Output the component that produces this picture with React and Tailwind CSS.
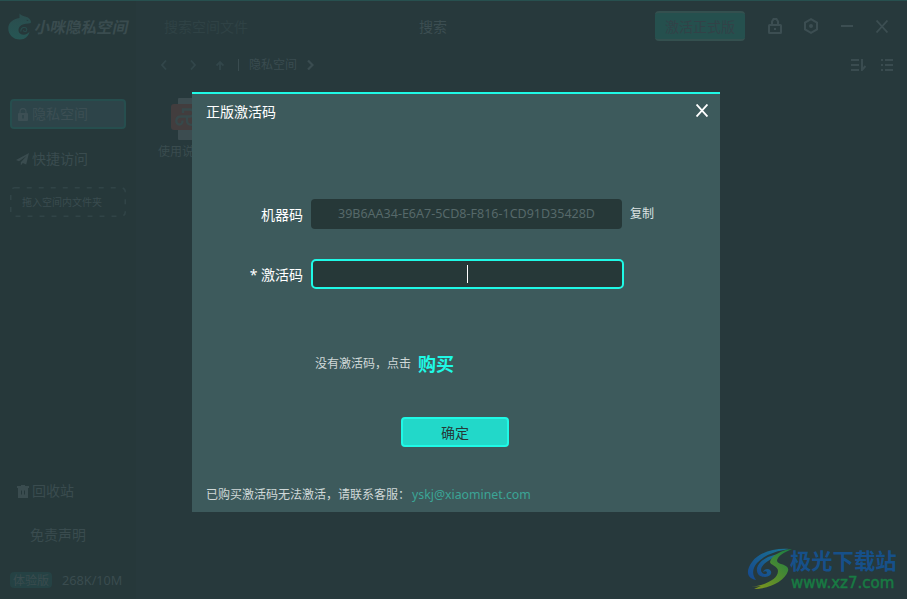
import React from 'react';

const Logo = () => (
  <svg width="24" height="27" viewBox="0 0 24 27" fill="none">
    <defs>
      <linearGradient id="logoFill" x1="0" y1="0" x2="0" y2="1">
        <stop offset="0" stopColor="#2b4c4d" />
        <stop offset="1" stopColor="#265654" />
      </linearGradient>
    </defs>
    <path
      d="M11.5 0.5C14 3.5 18 3 20.5 5C22.5 6.5 23.3 8.5 22.8 10C19.5 11 16 10.5 13.5 12C9.8 14.2 9.8 18.5 12 20.5C15 22.8 20 21.5 21.5 18.5C20.7 23 17 26.5 12 26.5C5 26.5 0.3 21.5 0.3 15.5C0.3 9.5 5 6 11.5 5Z"
      fill="url(#logoFill)"
    />
    <path d="M13 18.5C11.8 14 18.8 13 18.8 16.8C18.8 19.3 15.5 19.3 15.5 17.2" stroke="#284d4d" strokeWidth="1.1" />
    <path d="M18.8 6.8l1.8 0.7l-1.8 0.5z" fill="#26383b" />
  </svg>
);

const LockSolid = () => (
  <svg width="10" height="13" viewBox="0 0 10 13">
    <path d="M2 5.5V3.5a3 3 0 0 1 6 0V5.5" fill="none" stroke="#3c4f54" strokeWidth="1.3" />
    <path d="M1 5H9a1 1 0 0 1 1 1v6a1 1 0 0 1-1 1H1a1 1 0 0 1-1-1V6a1 1 0 0 1 1-1z" fill="#3c4f54" />
    <path d="M5 7v3.5" stroke="#2d4449" strokeWidth="1.6" />
  </svg>
);

const Plane = () => (
  <svg width="13" height="13" viewBox="0 0 13 13" fill="#3a4c4f">
    <path d="M13 0L0 7l3 1.3L10.5 3L4.8 9.2V12.5L6.8 10.1L10.2 11.6z" />
  </svg>
);

const Trash = () => (
  <svg width="12" height="13" viewBox="0 0 12 13">
    <path d="M4 0h4v1h4v2H0V1h4zM1 3h10v10H1z" fill="#3a4c4f" />
    <path d="M4.5 5.5v4M7.5 5.5v4" stroke="#26383b" />
  </svg>
);

const Watermark = () => (
  <div className="absolute left-[747px] top-[545px] flex">
    <svg width="46" height="46" viewBox="0 0 46 46">
      <defs>
        <linearGradient id="markBlue" x1="1" y1="0" x2="0" y2="1">
          <stop offset="0" stopColor="#1a7595" />
          <stop offset="1" stopColor="#16478c" />
        </linearGradient>
        <linearGradient id="markGreen" x1="1" y1="0" x2="0" y2="1">
          <stop offset="0" stopColor="#177d45" />
          <stop offset="1" stopColor="#86971b" />
        </linearGradient>
      </defs>
      <path d="M42 3C28 2 12 6 5 16C-1 24 -1 32 9 34C5 29 5 23 10 17C17 9 29 5 42 3Z" fill="url(#markBlue)" />
      <path
        d="M33 8C23 9 12 14 10 22C9 28 13 31 18 31C23 31 26 27 23 24C21 22 17 23 16 26C18 25 20 25 20 27C19 29 14 28 14 24C14 18 24 13 33 8Z"
        fill="url(#markBlue)"
      />
      <path
        d="M45 3C34 4 24 10 23 16C23 19 31 20 31 25C31 33 19 39 4 41L14 40L7 43C22 43 38 35 41 25C43 18 31 19 30 15C30 10 38 6 45 3Z"
        fill="url(#markGreen)"
      />
    </svg>
    <div className="-ml-[3px] whitespace-nowrap">
      <div className="mt-px h-[27px] text-[21.3px] leading-[27px] font-bold text-[#16508a]">极光下载站</div>
      <div
        className="ml-px h-[18px] text-[15px] leading-[18px] text-[#187b43] [-webkit-text-stroke:0.5px_#187b43]"
        style={{ fontFamily: '"DejaVu Sans", sans-serif' }}
      >
        www.xz7.com
      </div>
    </div>
  </div>
);

const Sidebar = () => (
  <aside className="flex w-[136px] shrink-0 flex-col bg-[#26383a] text-sm leading-5 whitespace-nowrap text-[#3a4c4f]">
    <div className="mt-3 ml-2 flex h-[27px] items-center">
      <Logo />
      <span className="ml-[3px] -skew-x-12 text-[15.6px] font-bold">小咪隐私空间</span>
    </div>
    <div className="mt-[59px] ml-2.5 flex h-[30px] w-[116px] items-center rounded border-2 border-[#264e4e] bg-[#2d4449] pl-1.5 text-[#3c4f54]">
      <LockSolid />
      <span className="ml-1">隐私空间</span>
    </div>
    <div className="mt-5 ml-4 flex h-5 items-center">
      <Plane />
      <span className="ml-[3px]">快捷访问</span>
    </div>
    <div className="relative mt-[18px] ml-2.5 flex h-[30px] w-[116px] items-center pl-3 text-[10px]">
      <svg className="absolute inset-0" width="116" height="30" fill="none">
        <rect x="0.75" y="0.75" width="114.5" height="28.5" rx="4" stroke="#314447" strokeWidth="1.5" strokeDasharray="5 7" />
      </svg>
      拖入空间内文件夹
    </div>
    <div className="mt-[264px] ml-[17px] flex h-5 items-center">
      <Trash />
      <span className="ml-[3px]">回收站</span>
    </div>
    <div className="mt-6 ml-[30px] h-5">免责声明</div>
    <div className="mt-[27px] ml-2.5 flex h-4 items-center">
      <span className="flex h-4 w-[42px] items-center justify-center rounded bg-[#254244] pt-0.5 text-xs">体验版</span>
      <span className="ml-2.5 text-[12.7px]">268K/10M</span>
    </div>
  </aside>
);

const TitleBar = () => (
  <header className="flex h-[50px] items-center text-[#3c4e52]">
    <div className="ml-[14px] flex h-[30px] w-[241px] items-center rounded pt-0.5 pl-[14px] text-sm text-[#2f4245]">搜索空间文件</div>
    <span className="ml-7 pt-0.5 text-sm">搜索</span>
    <button className="ml-[208px] h-[30px] w-[90px] rounded border-y-2 border-[#34504f] bg-[#25504e] pt-0.5 text-sm text-[#324248]">
      激活正式版
    </button>
    <svg className="ml-[23px]" width="14" height="16" viewBox="0 0 14 16" fill="none" stroke="currentColor" strokeWidth="2">
      <rect x="1" y="7" width="12" height="8" rx="0.5" />
      <path d="M4 7V3.5L5.5 1H8.5L10 3.5V7" />
      <path d="M7 10v2" />
    </svg>
    <svg className="ml-[22px]" width="14" height="16" viewBox="0 0 14 16" fill="none" stroke="currentColor" strokeWidth="2">
      <path d="M7 1.2L13 4.6V11.4L7 14.8L1 11.4V4.6Z" />
      <circle cx="7" cy="8" r="2" fill="currentColor" stroke="none" />
    </svg>
    <svg className="ml-[23px]" width="12" height="14" stroke="currentColor" strokeWidth="2">
      <path d="M0 7H12" />
    </svg>
    <svg className="ml-[23px]" width="12" height="13" fill="none" stroke="currentColor" strokeWidth="1.8">
      <path d="M0.5 0.5L11.5 12.5M11.5 0.5L0.5 12.5" />
    </svg>
  </header>
);

const PathBar = () => (
  <div className="flex h-7 items-center text-xs text-[#3a4c50]">
    <svg className="ml-[25px]" width="6" height="10" fill="none" stroke="#32464a" strokeWidth="1.8">
      <path d="M5 0.5L1 5L5 9.5" />
    </svg>
    <svg className="ml-[23px]" width="6" height="10" fill="none" stroke="#32464a" strokeWidth="1.8">
      <path d="M1 0.5L5 5L1 9.5" />
    </svg>
    <svg className="ml-5" width="8" height="9" fill="none" stroke="#32464a" strokeWidth="1.8">
      <path d="M4 9V1M0.5 4.5L4 1L7.5 4.5" />
    </svg>
    <span className="ml-[14px] h-3 w-px bg-[#3a4c50]" />
    <span className="ml-2.5">隐私空间</span>
    <svg className="ml-[10px]" width="7" height="10" fill="none" stroke="currentColor" strokeWidth="2.2">
      <path d="M1 0.5L5.5 5L1 9.5" />
    </svg>
    <svg className="ml-auto" width="15" height="12" stroke="currentColor" strokeWidth="2" fill="none">
      <path d="M0 1H8M0 6H8M0 11H8M11 0V11L14.5 7" />
    </svg>
    <svg className="mr-[14px] ml-[15px]" width="12" height="12" stroke="currentColor" strokeWidth="2">
      <path d="M0 1H2M4 1H12M0 6H2M4 6H12M0 11H2M4 11H12" />
    </svg>
  </div>
);

const FileItem = () => (
  <div className="mt-[19px] ml-[22px] w-12 text-xs leading-5 whitespace-nowrap text-[#3a4c4f]">
    <svg className="ml-[13px]" width="40" height="42" viewBox="0 0 40 42">
      <rect x="7" y="0" width="30" height="42" rx="1" fill="#3c4c50" />
      <rect x="0" y="6" width="34" height="26" rx="3" fill="#423d3e" />
      <path
        d="M12 15V11.5H19C23 11.5 24 18 19 18.5H10C4 18.5 4 26.5 8.5 26.5C11 26.5 11.5 24.5 11.5 22.5M16 18.5V23C16 26 18 27 22 27"
        fill="none"
        stroke="#37494b"
        strokeWidth="2.3"
      />
    </svg>
    <div className="mt-0.5">使用说明</div>
  </div>
);

const ActivationDialog = () => (
  <div className="absolute top-[91px] left-[192px] flex h-[420px] w-[528px] flex-col border-t-2 border-[#1ff9e6] bg-[#3d5a5c] whitespace-nowrap text-white">
    <div className="flex h-9 items-center justify-between pr-3 pl-[14px]">
      <h2 className="text-sm">正版激活码</h2>
      <svg className="mb-[3px]" width="12" height="13" stroke="#fff" strokeWidth="1.9">
        <path d="M0.5 0.5L11.5 12.5M11.5 0.5L0.5 12.5" />
      </svg>
    </div>
    <div className="mt-[69px] flex h-[30px] items-center">
      <label className="w-[111px] pt-0.5 text-right text-sm">机器码</label>
      <div className="ml-2 flex h-[30px] w-[311px] items-center justify-center rounded bg-[#263838] text-[12.5px] text-[#56696a]">
        39B6AA34-E6A7-5CD8-F816-1CD91D35428D
      </div>
      <span className="ml-2 text-xs text-[#dce2e2]">复制</span>
    </div>
    <div className="mt-[30px] flex h-[30px] items-center">
      <label className="w-[111px] pt-0.5 text-right text-sm">* 激活码</label>
      <div className="ml-2 flex h-[30px] w-[313px] items-center justify-center rounded-[5px] border-2 border-[#1ff9e6] bg-[#263838]">
        <span className="h-[18px] w-px bg-white" />
      </div>
    </div>
    <div className="mt-[60px] ml-[123px] flex h-[30px] items-center">
      <span className="text-xs text-[#d0d8d8]">没有激活码，点击</span>
      <a className="ml-[7px] text-lg font-bold text-[#1ff9e6]">购买</a>
    </div>
    <button className="mt-[38px] ml-[209px] flex h-[30px] w-[108px] items-center justify-center rounded border-2 border-[#1ff9e6] bg-[#22d8c9] pt-0.5 text-sm text-[#263838]">
      确定
    </button>
    <p className="mt-[38px] ml-[14px] flex h-5 items-center text-xs text-[#d0d8d8]">
      已购买激活码无法激活，请联系客服：
      <a className="ml-0.5 text-[12.3px] text-[#3ba596]">yskj@xiaominet.com</a>
    </p>
  </div>
);

const App = () => {
  return (
    <div className="relative flex h-[599px] w-[907px] overflow-hidden border-t border-[#27504f] bg-[#27393c] font-['Noto_Sans','Noto_Sans_CJK_SC',sans-serif]">
      <Sidebar />
      <main className="min-w-0 flex-1">
        <TitleBar />
        <PathBar />
        <FileItem />
      </main>
      <ActivationDialog />
      <Watermark />
    </div>
  );
};

export default App;
